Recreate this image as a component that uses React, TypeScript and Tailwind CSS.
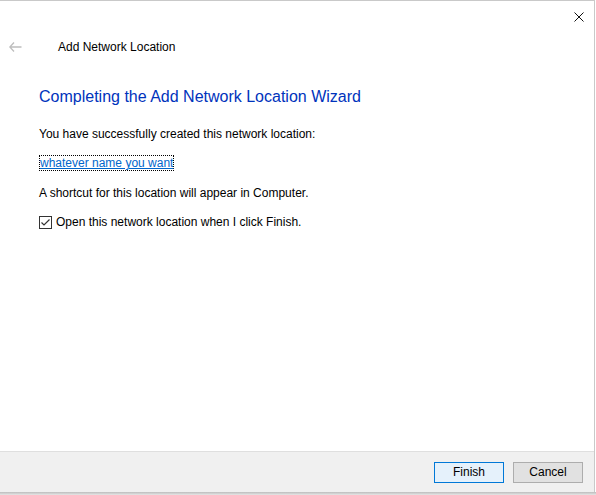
import React from "react";

const font = { fontFamily: '"Liberation Sans", Arial, sans-serif' };

export default function App() {
  return (
    <div
      className="relative flex h-[495px] w-[596px] flex-col bg-white text-[12px] text-black"
      style={font}
    >
      {/* window frame */}
      <div className="flex h-[492px] w-[595px] flex-col border-t border-r border-[#c9c9c9]">
        {/* caption bar */}
        <div className="flex h-[31px] justify-end">
          <button className="flex h-[31px] w-[30px] items-center justify-center">
            <svg width="10" height="10" viewBox="0 0 10 10">
              <path d="M0.5 0.5 L9.5 9.5 M9.5 0.5 L0.5 9.5" stroke="#111" strokeWidth="1" fill="none" />
            </svg>
          </button>
        </div>

        {/* wizard header */}
        <div className="flex h-[30px] items-center">
          <div className="flex w-[58px] items-center pl-[9px]">
            <svg width="13" height="10" viewBox="0 0 13 10">
              <path d="M5 0.5 L0.8 5 L5 9.5 M0.8 5 H12.5" stroke="#bdbdbd" strokeWidth="1.3" fill="none" />
            </svg>
          </div>
          <span>Add Network Location</span>
        </div>

        {/* wizard body */}
        <div className="flex flex-col pl-[39px] pt-[24px]">
          <h1 className="text-[16px] leading-[21px] text-[#0033bc]">
            Completing the Add Network Location Wizard
          </h1>
          <p className="mt-[19px] leading-[16px]">You have successfully created this network location:</p>
          <div className="mt-[13px] flex">
            <a
              href="#"
              className="border border-dotted border-black px-0 leading-[14px] text-[#0066cc] underline"
            >
              whatever name you want
            </a>
          </div>
          <p className="mt-[14px] leading-[16px]">A shortcut for this location will appear in Computer.</p>
          <label className="mt-[13px] flex items-center gap-[4px] leading-[16px]">
            <span className="flex h-[13px] w-[13px] items-center justify-center border border-[#333]">
              <svg width="11" height="11" viewBox="0 0 11 11">
                <path d="M1.5 5.5 L4 8 L9.5 2.5" stroke="#333" strokeWidth="1.2" fill="none" />
              </svg>
            </span>
            Open this network location when I click Finish.
          </label>
        </div>

        {/* button strip */}
        <div className="mt-auto flex h-[41px] items-center justify-end gap-[9px] border-t border-[#dfdfdf] bg-[#f0f0f0] pr-[11px]">
          <button className="h-[21px] w-[70px] border border-[#0078d7] bg-[#e5f1fb]">Finish</button>
          <button className="h-[21px] w-[70px] border border-[#adadad] bg-[#e1e1e1]">Cancel</button>
        </div>
      </div>
      <div className="h-[3px] w-[596px] bg-gradient-to-b from-[#bdbdbd] to-[#e6e6e6]" />
    </div>
  );
}
